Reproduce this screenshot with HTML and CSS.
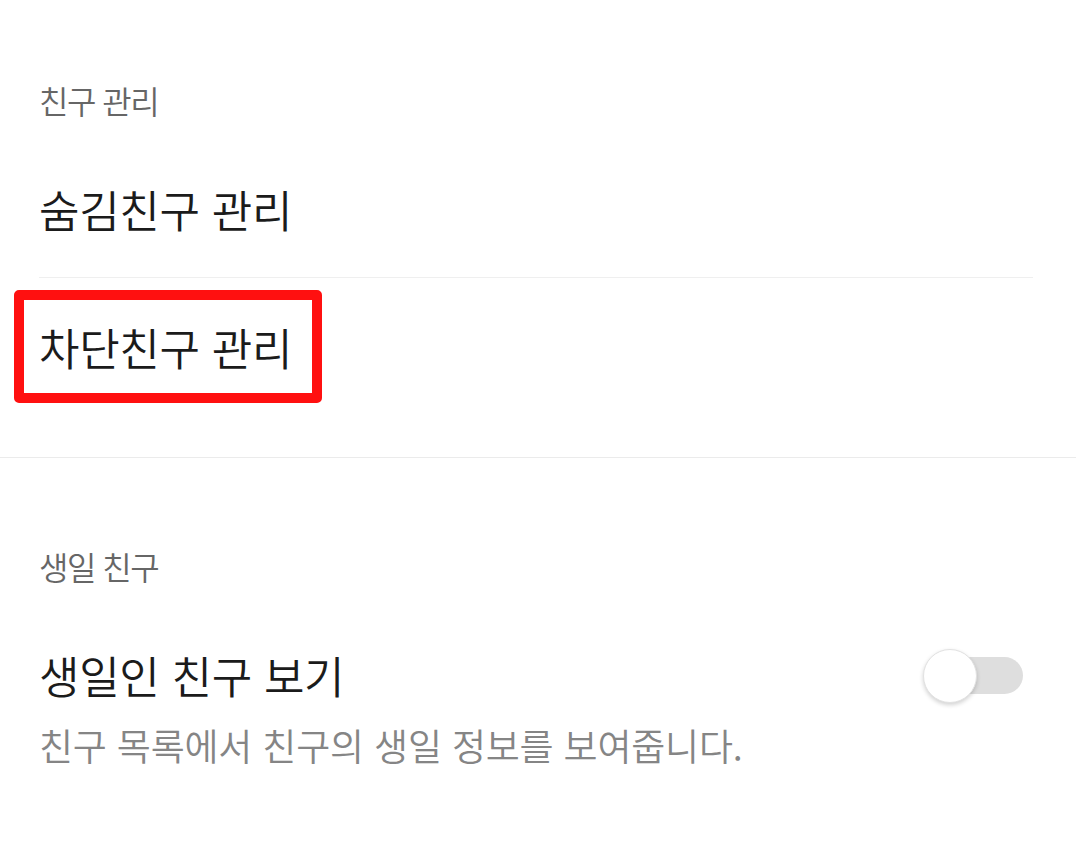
FILE: index.html
```html
<!DOCTYPE html>
<html lang="ko">
<head>
    <meta charset="UTF-8">
    <meta name="viewport" content="width=device-width, initial-scale=1.0">
    <title>친구 설정</title>
    <link rel="stylesheet" href="styles.css">
</head>
<body>
    <div class="settings">
        <section class="section">
            <h2 class="section-title">친구 관리</h2>
            <div class="row row-divided">
                <span class="row-title">숨김친구 관리</span>
            </div>
            <div class="row">
                <span class="row-title marked">차단친구 관리<span class="mark-box"></span></span>
            </div>
        </section>

        <section class="section">
            <h2 class="section-title">생일 친구</h2>
            <div class="row row-toggle">
                <div class="row-text">
                    <span class="row-title">생일인 친구 보기</span>
                    <span class="row-desc">친구 목록에서 친구의 생일 정보를 보여줍니다.</span>
                </div>
                <div class="switch">
                    <div class="switch-track"></div>
                    <div class="switch-knob"></div>
                </div>
            </div>
        </section>
    </div>
</body>
</html>
```

FILE: styles.css
```css
body {
    font-family: "Noto Sans CJK KR", "Noto Sans", sans-serif;
    margin: 0;
    background-color: #fff;
    color: #1b1b1b;
}
.settings {
    display: flex;
    flex-direction: column;
}
.section {
    padding: 78px 39px 42px 39px;
    border-bottom: 1px solid #ebebeb;
}
.section:first-child {
    padding-top: 70px;
}
.section:last-child {
    border-bottom: none;
}
.section-title {
    margin: 0 0 10px 0;
    font-size: 32px;
    font-weight: 350;
    letter-spacing: -1.5px;
    line-height: 60px;
    color: #666;
}
.row {
    display: flex;
    align-items: center;
    min-height: 137px;
}
.row-divided {
    border-bottom: 1px solid #efefef;
    margin-right: 4px;
}
.row-title {
    font-size: 44px;
    font-weight: 350;
    letter-spacing: -0.3px;
    line-height: 60px;
}
.marked {
    position: relative;
}
.mark-box {
    position: absolute;
    left: -25px;
    right: -30px;
    top: -27px;
    bottom: -26px;
    border: 10px solid #ff1010;
    border-radius: 5px;
}
.row-toggle {
    justify-content: space-between;
    align-items: flex-start;
    padding-top: 39px;
}
.row-text {
    display: flex;
    flex-direction: column;
}
.row-desc {
    margin-top: 10px;
    font-size: 37px;
    font-weight: 350;
    letter-spacing: -0.2px;
    line-height: 60px;
    color: #858585;
}
.switch {
    position: relative;
    width: 100px;
    height: 56px;
    margin: 3px 14px 0 0;
}
.switch-track {
    position: absolute;
    left: 12px;
    right: 0;
    top: 9px;
    height: 37px;
    border-radius: 19px;
    background-color: #dedede;
}
.switch-knob {
    position: absolute;
    left: 0;
    top: 1px;
    width: 52px;
    height: 52px;
    border-radius: 50%;
    background-color: #fff;
    border: 1px solid #e2e2e2;
    box-shadow: 0 2px 4px rgba(0, 0, 0, 0.18);
}
```
